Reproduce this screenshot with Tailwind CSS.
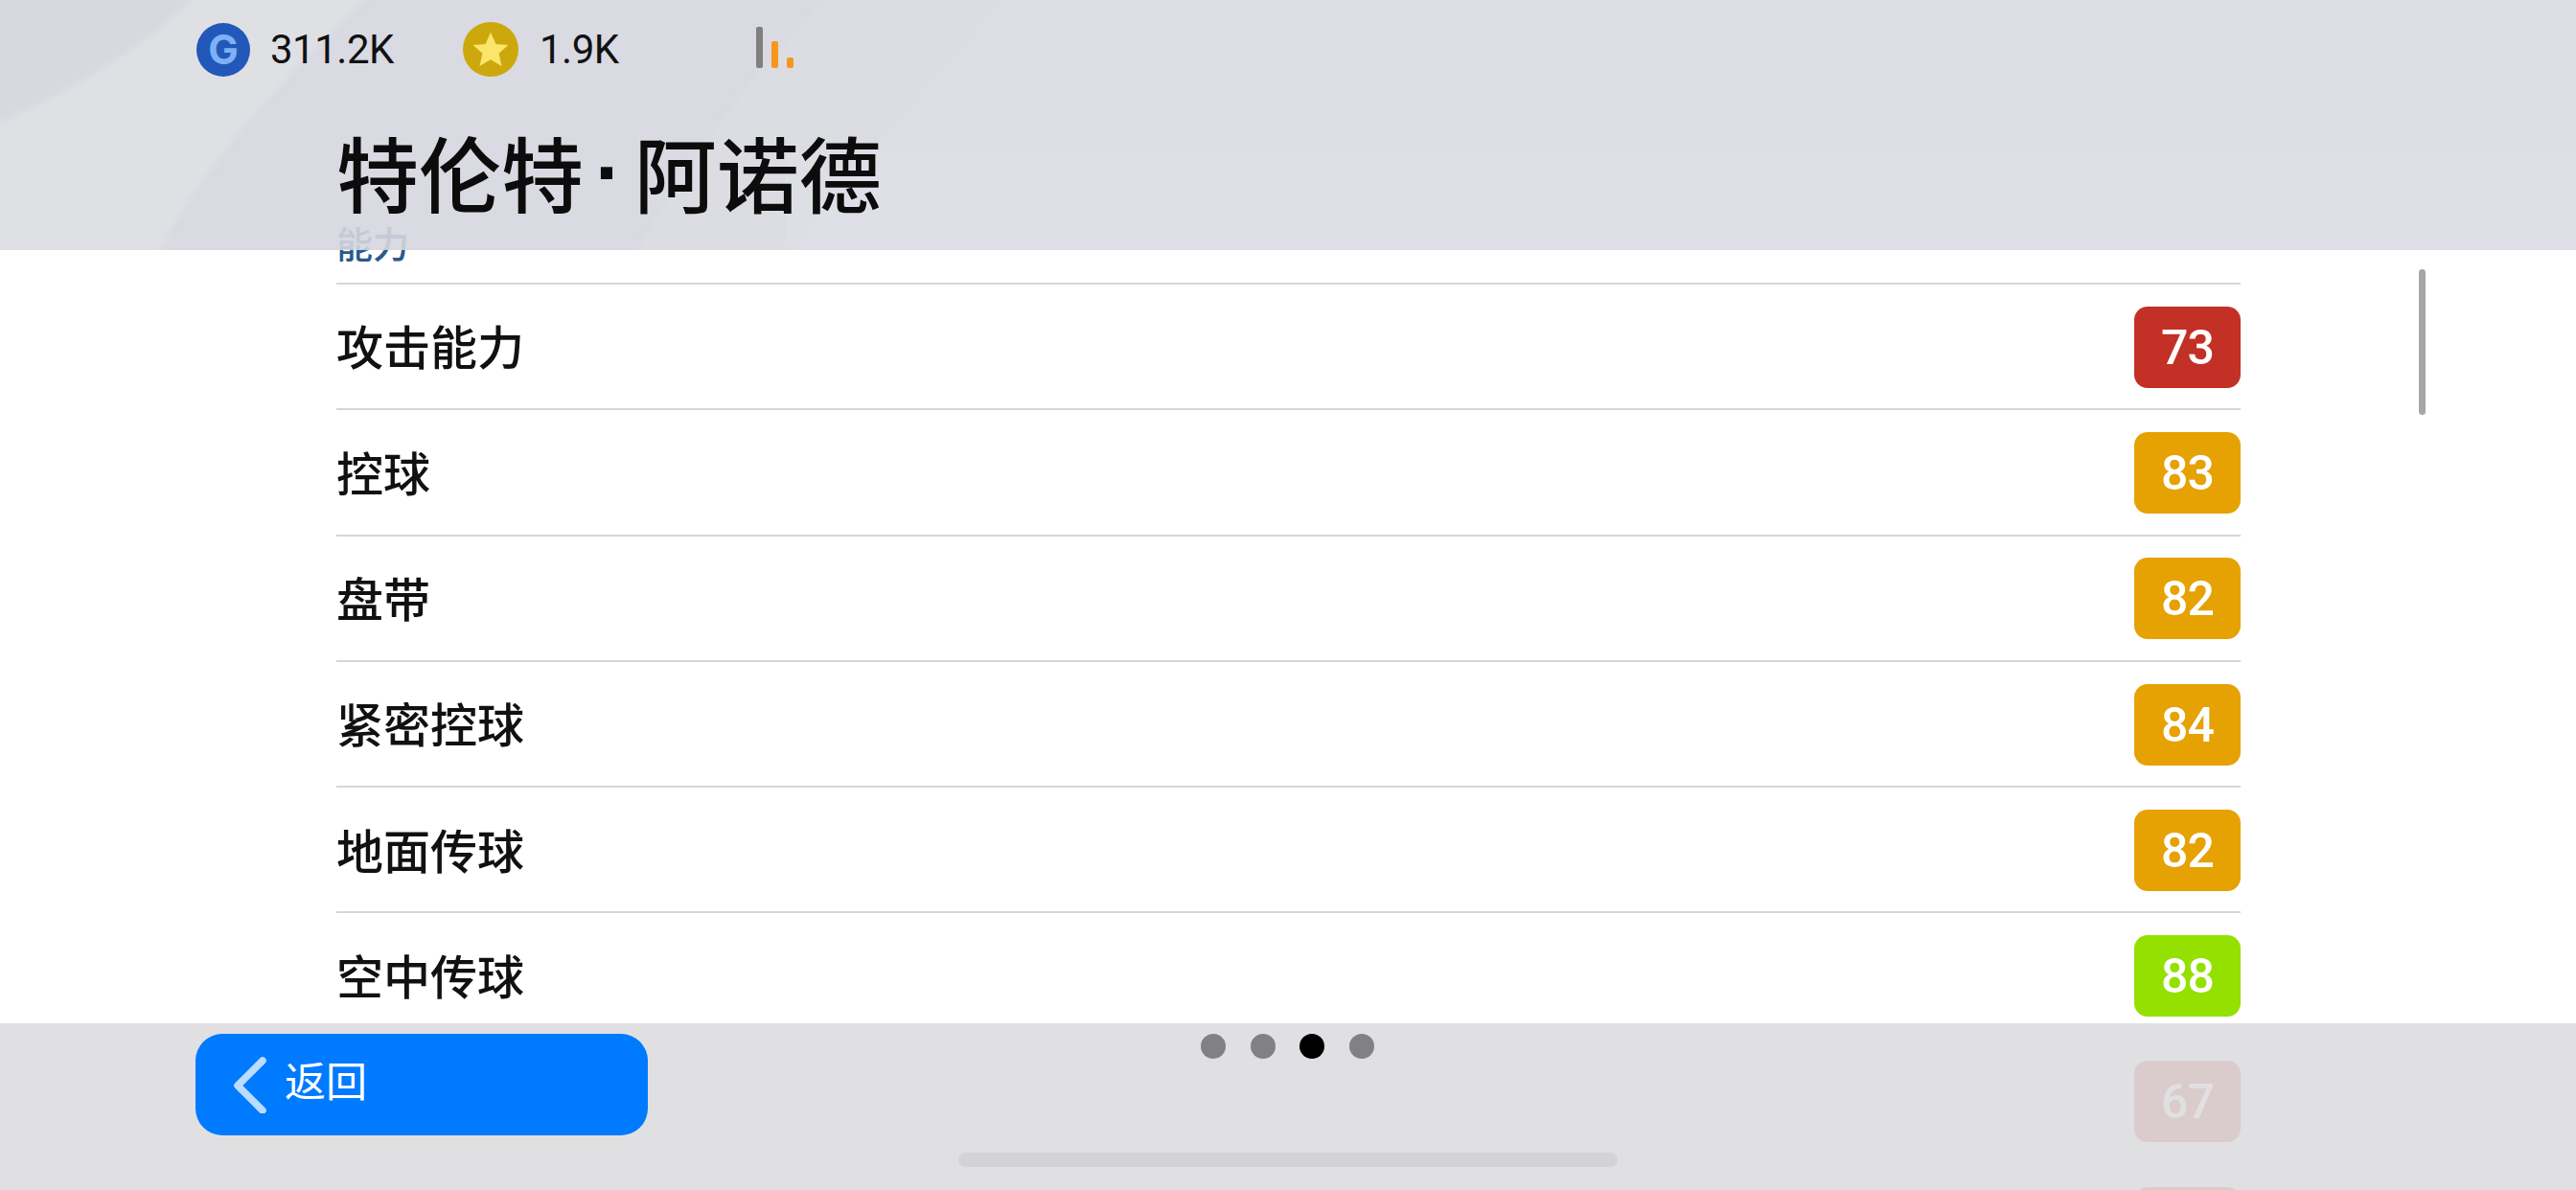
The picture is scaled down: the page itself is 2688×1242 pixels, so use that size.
<!doctype html>
<html lang="zh">
<head>
<meta charset="utf-8">
<title>特伦特·阿诺德</title>
<script src="https://cdn.jsdelivr.net/npm/@tailwindcss/browser@4"></script>
</head>
<body class="bg-white">
<div class="relative w-[2688px] h-[1242px] overflow-hidden bg-white text-[#111] font-['Noto_Sans_CJK_SC',sans-serif]">

  <!-- scrolling list, sits under the two translucent bars -->
  <div class="pl-[351px] w-[2338px]">
    <div class="h-[295px] pt-[234px] text-[38px] leading-[38px] font-medium text-[#2a5a8a]">能力</div>

    <div class="h-[131.3px] border-t-2 border-[#d6d6d6] flex items-center justify-between">
      <span class="mb-[3px] text-[49px] font-medium">攻击能力</span>
      <span class="mt-[1px] pt-[2px] w-[111px] h-[85px] rounded-[14px] bg-[#c33025] flex items-center justify-center text-white text-[50px] font-medium tracking-[-1px] font-['Roboto',sans-serif]">73</span>
    </div>
    <div class="h-[131.3px] border-t-2 border-[#d6d6d6] flex items-center justify-between">
      <span class="mb-[3px] text-[49px] font-medium">控球</span>
      <span class="mt-[1px] pt-[2px] w-[111px] h-[85px] rounded-[14px] bg-[#e6a103] flex items-center justify-center text-white text-[50px] font-medium tracking-[-1px] font-['Roboto',sans-serif]">83</span>
    </div>
    <div class="h-[131.3px] border-t-2 border-[#d6d6d6] flex items-center justify-between">
      <span class="mb-[3px] text-[49px] font-medium">盘带</span>
      <span class="mt-[1px] pt-[2px] w-[111px] h-[85px] rounded-[14px] bg-[#e6a103] flex items-center justify-center text-white text-[50px] font-medium tracking-[-1px] font-['Roboto',sans-serif]">82</span>
    </div>
    <div class="h-[131.3px] border-t-2 border-[#d6d6d6] flex items-center justify-between">
      <span class="mb-[3px] text-[49px] font-medium">紧密控球</span>
      <span class="mt-[1px] pt-[2px] w-[111px] h-[85px] rounded-[14px] bg-[#e6a103] flex items-center justify-center text-white text-[50px] font-medium tracking-[-1px] font-['Roboto',sans-serif]">84</span>
    </div>
    <div class="h-[131.3px] border-t-2 border-[#d6d6d6] flex items-center justify-between">
      <span class="mb-[3px] text-[49px] font-medium">地面传球</span>
      <span class="mt-[1px] pt-[2px] w-[111px] h-[85px] rounded-[14px] bg-[#e6a103] flex items-center justify-center text-white text-[50px] font-medium tracking-[-1px] font-['Roboto',sans-serif]">82</span>
    </div>
    <div class="h-[131.3px] border-t-2 border-[#d6d6d6] flex items-center justify-between">
      <span class="mb-[3px] text-[49px] font-medium">空中传球</span>
      <span class="mt-[1px] pt-[2px] w-[111px] h-[85px] rounded-[14px] bg-[#94e000] flex items-center justify-center text-white text-[50px] font-medium tracking-[-1px] font-['Roboto',sans-serif]">88</span>
    </div>
    <div class="h-[131.3px] border-t-2 border-transparent flex items-center justify-end">
      <span class="mt-[1px] pt-[2px] w-[111px] h-[85px] rounded-[14px] bg-[#c33025] flex items-center justify-center text-white text-[50px] font-medium tracking-[-1px] font-['Roboto',sans-serif]">67</span>
    </div>
    <div class="h-[131.3px] border-t-2 border-transparent flex items-center justify-end">
      <span class="mt-[1px] w-[111px] h-[85px] rounded-[14px] bg-[#c33025]"></span>
    </div>
  </div>

  <!-- scrollbar -->
  <div class="absolute left-[2524px] top-[281px] w-[7px] h-[152px] rounded-full bg-[#a6a6a6]"></div>

  <!-- header -->
  <div class="absolute inset-x-0 top-0 h-[261px]">
    <svg class="absolute inset-0 opacity-90" width="2688" height="261" viewBox="0 0 2688 261">
      <rect width="2688" height="261" fill="#dadae4"/>
      <path class="blur-[2px]" d="M0-10H1045C960 80 890 170 814 270H0Z" fill="#d5d7df"/>
      <path class="blur-[3px]" d="M874-10H1045C960 80 890 170 814 270H660C720 160 790 70 874-10Z" fill="#d9dae1"/>
      <path class="blur-[3px]" d="M206-10H390C300 80 210 170 163 270H-10V130C70 95 150 50 206-10Z" fill="#dcdde2"/>
      <path class="blur-[3px]" d="M-10-10H206C150 50 70 95-10 130Z" fill="#d2d5db"/>
      <rect y="160" x="820" width="1874" height="101" fill="#fff" fill-opacity="0.06"/>
    </svg>
    <div class="relative pl-[205px] pt-[23px]">
      <div class="flex items-center h-[57px]">
        <span class="w-[56px] h-[56px] rounded-full bg-[#2158b9] flex items-center justify-center text-[#7fb0f5] text-[42px] font-bold font-['Inter',sans-serif]">G</span>
        <span class="ml-[21px] w-[201px] text-[42px] tracking-[-0.5px] leading-none text-[#111] font-['Roboto',sans-serif]">311.2K</span>
        <span class="w-[58px] h-[57px] rounded-full bg-[#cda80c] flex items-center justify-center">
          <svg width="42" height="42" viewBox="0 0 24 24"><path d="M12 1.500l3.100 7 7.400.7-5.600 5 1.700 7.500L12 17.800l-6.600 3.900 1.700-7.500-5.600-5 7.400-.7z" fill="#fbe56a"/></svg>
        </span>
        <span class="ml-[22px] w-[226px] text-[42px] tracking-[-0.5px] leading-none text-[#111] font-['Roboto',sans-serif]">1.9K</span>
        <span class="flex items-end h-[43px] gap-[9px] mb-[4px]">
          <span class="w-[7px] h-[43px] rounded-[2px] bg-[#808080]"></span>
          <span class="w-[7px] h-[28px] rounded-[2px] bg-[#f7951d]"></span>
          <span class="w-[7px] h-[11px] rounded-[2px] bg-[#f7951d]"></span>
        </span>
      </div>
      <h1 class="ml-[146px] mt-[57px] text-[86px] leading-[84px] font-medium text-[#0c0c0c] flex">
        <span>特伦特</span><span class="mx-[12px] font-bold font-['Liberation_Sans',sans-serif]">·</span><span>阿诺德</span>
      </h1>
    </div>
  </div>

  <!-- bottom bar -->
  <div class="absolute inset-x-0 top-[1068px] bottom-0 bg-[#dddde0]/90 pl-[204px] pt-[11px] flex items-start">
    <button class="w-[472px] h-[106px] rounded-[28px] bg-[#007aff] flex items-center text-white text-[43px] pl-[38px] pb-[12px]">
      <svg class="mr-[18px] mt-[12px]" width="37" height="60" viewBox="0 0 37 60" fill="none"><path d="M32 5L6 31l26 26" stroke="#bcdcff" stroke-width="7.500" stroke-linecap="round" stroke-linejoin="round"/></svg>
      返回
    </button>
    <div class="ml-[577px] flex gap-[25.500px]">
      <span class="w-[26px] h-[26px] rounded-full bg-[#808085]"></span>
      <span class="w-[26px] h-[26px] rounded-full bg-[#808085]"></span>
      <span class="w-[26px] h-[26px] rounded-full bg-black"></span>
      <span class="w-[26px] h-[26px] rounded-full bg-[#808085]"></span>
    </div>
  </div>

  <!-- home indicator -->
  <div class="absolute left-[1000px] bottom-[24px] w-[688px] h-[15px] rounded-full bg-[#d3d3d5]"></div>
</div>
</body>
</html>
